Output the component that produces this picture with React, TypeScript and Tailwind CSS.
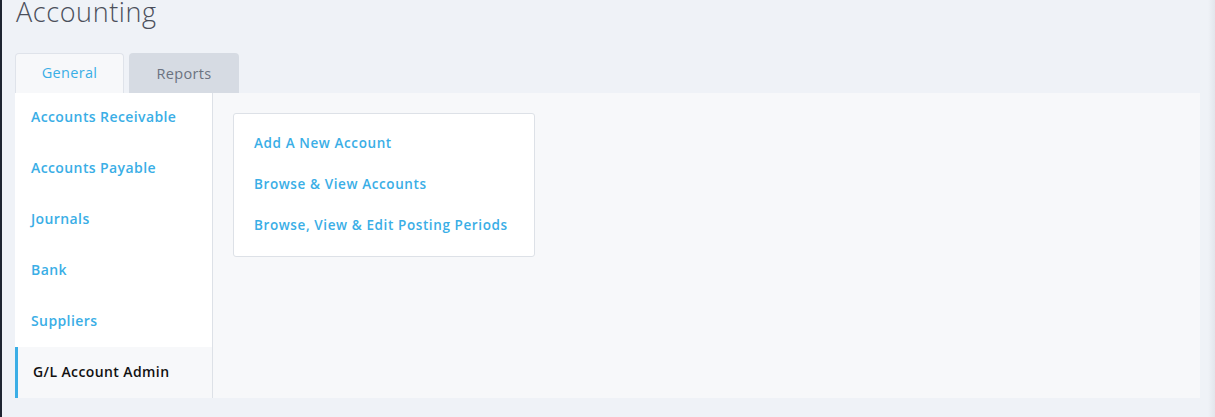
import React from "react";

const items = [
  "Accounts Receivable",
  "Accounts Payable",
  "Journals",
  "Bank",
  "Suppliers",
];

const links = [
  "Add A New Account",
  "Browse & View Accounts",
  "Browse, View & Edit Posting Periods",
];

export default function App() {
  return (
    <div
      className="flex h-[417px] w-full overflow-hidden bg-[#eff2f7]"
      style={{ fontFamily: '"Open Sans", "Noto Sans", sans-serif' }}
    >
      <div className="w-[2px] shrink-0 bg-[#1e2431]" />
      <div className="flex min-w-0 flex-1 flex-col pl-[13px] pr-[6px]">
        <div className="h-[53px] shrink-0">
          <h1 className="pl-[1px] text-[27px] font-light leading-[24px] tracking-[0.6px] text-[#4b4f5b]">
            Accounting
          </h1>
        </div>
        <div className="flex h-[40px] shrink-0 items-stretch gap-[5px]">
          <div className="flex w-[109px] items-center justify-center rounded-t-[4px] border border-b-0 border-[#dfe3ea] bg-[#f7f8fa] pb-[1px] text-[14.5px] tracking-[0.3px] text-[#3aaee6]">
            General
          </div>
          <div className="flex w-[110px] items-center justify-center rounded-t-[4px] bg-[#d6dbe3] pt-[1px] text-[14.5px] tracking-[0.3px] text-[#6b7280]">
            Reports
          </div>
        </div>
        <div className="flex h-[305px] w-[1185px] shrink-0 bg-[#f7f8fa]">
          <div className="flex w-[198px] shrink-0 flex-col border-r border-[#dde1e7] bg-white">
            {items.map((t) => (
              <div
                key={t}
                className="flex h-[51px] items-center pb-[3px] pl-[16px] text-[14px] font-semibold tracking-[0.4px] text-[#3aaee6]"
              >
                {t}
              </div>
            ))}
            <div className="flex h-[51px] items-center border-l-[3px] border-[#3aaee6] bg-[#f7f8fa] pb-[2px] pl-[15px] text-[14px] font-semibold tracking-[0.4px] text-[#111111]">
              G/L Account Admin
            </div>
          </div>
          <div className="pl-[20px] pt-[20px]">
            <div className="flex h-[144px] w-[302px] flex-col justify-center gap-[19px] rounded-[3px] border border-[#dde1e7] bg-white pb-[2px] pl-[20px]">
              {links.map((l) => (
                <div
                  key={l}
                  className="text-[13.5px] font-semibold leading-[22px] tracking-[0.6px] text-[#3aaee6]"
                >
                  {l}
                </div>
              ))}
            </div>
          </div>
        </div>
      </div>
      <div className="w-[7px] shrink-0 bg-gradient-to-r from-[#eff2f7] to-[#e3e6ec]" />
    </div>
  );
}
